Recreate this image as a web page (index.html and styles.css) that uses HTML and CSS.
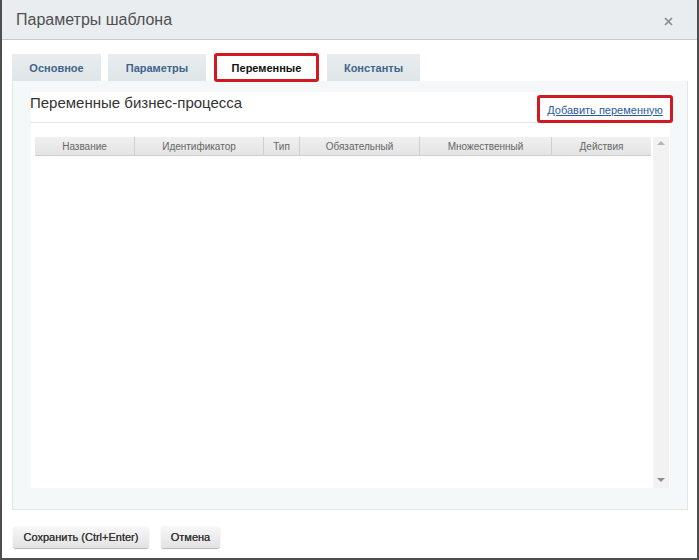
FILE: index.html
```html
<!DOCTYPE html>
<html lang="ru">
<head>
    <meta charset="UTF-8">
    <title>Параметры шаблона</title>
    <link rel="stylesheet" href="styles.css">
</head>
<body>
    <div class="dialog">
        <div class="dialog-head">
            <span class="dialog-title">Параметры шаблона</span>
            <span class="dialog-close">
                <svg width="9" height="9" viewBox="0 0 9 9"><path d="M1 1L8 8M8 1L1 8" stroke="#8a8a8a" stroke-width="1.7"/></svg>
            </span>
        </div>
        <div class="dialog-body">
            <div class="tabs">
                <div class="tab tab-main">Основное</div>
                <div class="tab tab-params">Параметры</div>
                <div class="tab tab-active">Переменные</div>
                <div class="tab tab-const">Константы</div>
            </div>
            <div class="tab-panel">
                <div class="tab-inner">
                    <div class="panel-head">
                        <h2>Переменные бизнес-процесса</h2>
                        <div class="add-box"><a class="add-link">Добавить переменную</a></div>
                    </div>
                    <div class="grid">
                        <div class="grid-table">
                            <div class="grid-header">
                                <div class="col col-name">Название</div>
                                <div class="col col-id">Идентификатор</div>
                                <div class="col col-type">Тип</div>
                                <div class="col col-req">Обязательный</div>
                                <div class="col col-multi">Множественный</div>
                                <div class="col col-act">Действия</div>
                            </div>
                        </div>
                        <div class="scrollbar">
                            <span class="arrow arrow-up"></span>
                            <span class="arrow arrow-down"></span>
                        </div>
                    </div>
                </div>
            </div>
        </div>
        <div class="dialog-foot">
            <button class="btn btn-save">Сохранить (Ctrl+Enter)</button>
            <button class="btn btn-cancel">Отмена</button>
        </div>
    </div>
</body>
</html>
```

FILE: styles.css
```css
html, body {
    margin: 0;
    padding: 0;
}
body {
    background-color: #4e4e4e;
    font-family: "Liberation Sans", Arial, sans-serif;
    width: 699px;
    height: 560px;
    overflow: hidden;
}
.dialog {
    margin-left: 2px;
    width: 695px;
    height: 558px;
    background-color: #fff;
    display: flex;
    flex-direction: column;
}
.dialog-head {
    height: 39px;
    background-color: #e9edf0;
    border-bottom: 1px solid #c3c9ce;
    display: flex;
    align-items: center;
    justify-content: space-between;
    padding: 0 24px 0 14px;
}
.dialog-title {
    font-size: 16px;
    color: #505050;
    padding-top: 1px;
}
.dialog-close {
    display: flex;
    padding-top: 3px;
}
.dialog-body {
    padding: 14px 9px 0 10px;
}
.tabs {
    display: flex;
    height: 27px;
    align-items: flex-end;
}
.tab {
    height: 27px;
    box-sizing: border-box;
    background: linear-gradient(#e9edef, #dfe5e8);
    font-size: 11px;
    font-weight: bold;
    color: #41648b;
    display: flex;
    align-items: center;
    justify-content: center;
    margin-right: 7px;
    padding-top: 1px;
}
.tab-main {
    width: 89px;
}
.tab-params {
    width: 98px;
    margin-right: 8px;
}
.tab-active {
    width: 105px;
    background: #fff;
    color: #111;
    border: 3px solid #d21820;
    border-radius: 3px;
    height: 29px;
    margin-bottom: -1px;
    position: relative;
    z-index: 1;
}
.tab-const {
    width: 93px;
    margin-left: 1px;
}
.tab-panel {
    height: 429px;
    box-sizing: border-box;
    background-color: #f5f8f9;
    border: 1px solid #e1e6e9;
    border-top: none;
    padding: 11px 17px 21px 18px;
}
.tab-inner {
    height: 100%;
    background-color: #fff;
    display: flex;
    flex-direction: column;
}
.panel-head {
    height: 30px;
    border-bottom: 1px solid #e3e6e8;
    display: flex;
    justify-content: space-between;
    align-items: flex-start;
}
.panel-head h2 {
    margin: 2px 0 0 -1px;
    font-size: 15px;
    font-weight: normal;
    color: #333;
}
.add-box {
    border: 3px solid #d21820;
    border-radius: 3px;
    height: 21px;
    width: 130px;
    margin: 3px -3px 0 0;
    display: flex;
    align-items: center;
    justify-content: center;
    padding-top: 1px;
}
.add-link {
    font-size: 11px;
    color: #2a5a9c;
    text-decoration: underline;
    cursor: pointer;
}
.grid {
    flex: 1;
    display: flex;
    padding: 14px 0 0 4px;
}
.grid-table {
    width: 616px;
}
.grid-header {
    display: flex;
    height: 18px;
    background: linear-gradient(#f0f0f0, #e4e4e4);
    border-bottom: 1px solid #cfcfcf;
}
.col {
    box-sizing: border-box;
    border-right: 1px solid #d0d0d0;
    font-size: 10px;
    color: #666;
    display: flex;
    align-items: center;
    justify-content: center;
}
.col-name { width: 100px; }
.col-id { width: 129px; }
.col-type { width: 36px; }
.col-req { width: 120px; }
.col-multi { width: 132px; }
.col-act { width: 99px; border-right: none; }
.scrollbar {
    width: 16px;
    margin-left: 2px;
    background-color: #f2f2f2;
    position: relative;
}
.arrow {
    position: absolute;
    left: 4px;
    width: 0;
    height: 0;
    border-left: 4px solid transparent;
    border-right: 4px solid transparent;
}
.arrow-up {
    top: 4px;
    border-bottom: 4px solid #b5b5b5;
}
.arrow-down {
    bottom: 6px;
    border-top: 4px solid #8e8e8e;
}
.dialog-foot {
    padding: 16px 0 0 11px;
    display: flex;
}
.btn {
    height: 22px;
    font-family: "Liberation Sans", Arial, sans-serif;
    font-size: 11px;
    color: #333;
    border: none;
    border-radius: 3px;
    background: linear-gradient(#f8f8f8, #e2e2e2);
    box-shadow: 0 1px 1px rgba(0, 0, 0, 0.3);
    padding: 0;
    margin-right: 12px;
    text-shadow: 0 0 0.2px #444;
}
.btn-save {
    width: 136px;
}
.btn-cancel {
    width: 59px;
}
```
